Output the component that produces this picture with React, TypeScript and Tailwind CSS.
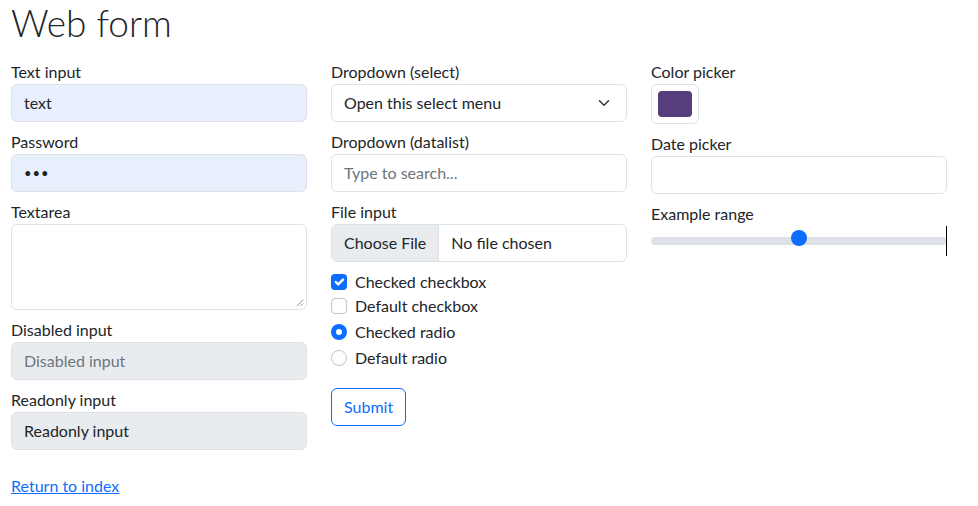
import { ReactNode } from "react";

function Field({ label, children }: { label: string; children: ReactNode }) {
  return (
    <label className="mb-2 block w-full">
      <span className="block leading-6">{label}</span>
      {children}
    </label>
  );
}

const box =
  "flex h-[38px] w-full items-center rounded-[6px] border border-[#dee2e6] px-3 leading-6";

function CheckRow({ kind, checked, label }: { kind: "box" | "radio"; checked?: boolean; label: string }) {
  return (
    <div className="flex h-6 items-center gap-2">
      {kind === "box" ? (
        checked ? (
          <span className="flex h-4 w-4 items-center justify-center rounded-[4px] bg-[#0d6efd]">
            <svg viewBox="0 0 20 20" className="h-4 w-4">
              <path d="m6 10 3 3 6-6" fill="none" stroke="#fff" strokeLinecap="round" strokeLinejoin="round" strokeWidth="3" />
            </svg>
          </span>
        ) : (
          <span className="h-4 w-4 rounded-[4px] border border-[#c4c4c4] bg-white" />
        )
      ) : checked ? (
        <span className="flex h-4 w-4 items-center justify-center rounded-full bg-[#0d6efd]">
          <span className="h-[6px] w-[6px] rounded-full bg-white" />
        </span>
      ) : (
        <span className="h-4 w-4 rounded-full border border-[#c4c4c4] bg-white" />
      )}
      <span>{label}</span>
    </div>
  );
}

export default function App() {
  return (
    <div className="h-[506px] w-[978px] overflow-hidden bg-white font-['Segoe_UI','Lato',sans-serif] text-base leading-6 text-[#212529]">
      <div className="pl-[11px]">
        <h1 className="pt-[2px] text-[37px] font-light leading-[42px]">Web form</h1>

        <div className="mt-4 grid grid-cols-[296px_296px_296px] gap-x-6">
          {/* column 1 */}
          <div>
            <Field label="Text input">
              <div className={`${box} bg-[#e8f0fe]`}>text</div>
            </Field>
            <Field label="Password">
              <div className={`${box} bg-[#e8f0fe] text-[13px] tracking-[1px]`}>•••</div>
            </Field>
            <Field label="Textarea">
              <div className="relative h-[86px] w-full rounded-[6px] border border-[#dee2e6]">
                <svg viewBox="0 0 10 10" className="absolute bottom-[2px] right-[2px] h-[9px] w-[9px]">
                  <path d="M9 2 2 9M9 6 6 9" stroke="#888" strokeWidth="1" />
                </svg>
              </div>
            </Field>
            <Field label="Disabled input">
              <div className={`${box} bg-[#e9ecef] text-[#6c757d]`}>Disabled input</div>
            </Field>
            <Field label="Readonly input">
              <div className={`${box} bg-[#e9ecef]`}>Readonly input</div>
            </Field>
          </div>

          {/* column 2 */}
          <div>
            <Field label="Dropdown (select)">
              <div className={`${box} justify-between`}>
                <span>Open this select menu</span>
                <svg viewBox="0 0 16 16" className="mr-[2px] h-3 w-4">
                  <path d="m2 5 6 6 6-6" fill="none" stroke="#343a40" strokeLinecap="round" strokeLinejoin="round" strokeWidth="2" />
                </svg>
              </div>
            </Field>
            <Field label="Dropdown (datalist)">
              <div className={`${box} text-[#6c757d]`}>Type to search...</div>
            </Field>
            <Field label="File input">
              <div className="flex h-[38px] w-full items-stretch overflow-hidden rounded-[6px] border border-[#dee2e6]">
                <span className="flex items-center border-r border-[#dee2e6] bg-[#e9ecef] px-3">Choose File</span>
                <span className="flex items-center px-3">No file chosen</span>
              </div>
            </Field>
            <CheckRow kind="box" checked label="Checked checkbox" />
            <CheckRow kind="box" label="Default checkbox" />
            <div className="mt-[2px]">
              <CheckRow kind="radio" checked label="Checked radio" />
            </div>
            <div className="mt-[2px] mb-[2px]">
              <CheckRow kind="radio" label="Default radio" />
            </div>
            <button className="mt-4 h-[38px] rounded-[6px] border border-[#0d6efd] px-3 text-[#0d6efd]">Submit</button>
          </div>

          {/* column 3 */}
          <div>
            <Field label="Color picker">
              <div className="h-10 w-12 rounded-[6px] border border-[#dee2e6] p-[6px]">
                <div className="h-full w-full rounded-[4px] bg-[#563d7c]" />
              </div>
            </Field>
            <Field label="Date picker">
              <div className={box} />
            </Field>
            <Field label="Example range">
              <div className="relative flex h-[30px] w-full items-center">
                <div className="h-2 w-full rounded-full bg-[#dee2e6]" />
                <div className="absolute left-[140px] top-1 h-4 w-4 rounded-full bg-[#0d6efd]" />
                <div className="absolute right-0 top-0 h-[30px] w-[1px] bg-black" />
              </div>
            </Field>
          </div>
        </div>

        <a href="#" className="mt-4 inline-block text-[#0d6efd] underline">
          Return to index
        </a>
      </div>
    </div>
  );
}
